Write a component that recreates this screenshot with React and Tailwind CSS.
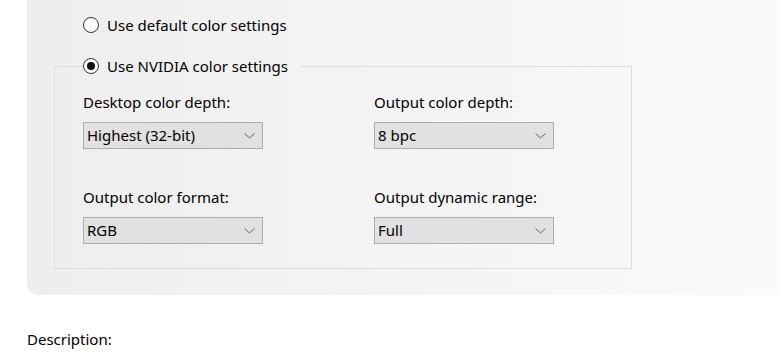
import React, { useState } from 'react'

const Radio = ({ checked, label, onClick }) => {
  return (
    <button onClick={onClick} className="flex items-center gap-2 h-[22px] text-left">
      <span className="w-4 h-4 rounded-full border border-[#333333] bg-white flex items-center justify-center">
        {checked && <span className="w-2 h-2 rounded-full bg-[#111111]" />}
      </span>
      <span>{label}</span>
    </button>
  )
}

const Dropdown = ({ value }) => {
  return (
    <div className="w-[180px] h-[27px] border border-[#adadad] bg-[#e1e1e1] flex items-center justify-between pl-[3px] pr-[7px]">
      <span>{value}</span>
      <svg width="11" height="6" viewBox="0 0 11 6" fill="none">
        <path d="M0.5 0.5 L5.5 5 L10.5 0.5" stroke="#606060" strokeWidth="1" />
      </svg>
    </div>
  )
}

const Field = ({ label, value }) => {
  return (
    <div className="flex flex-col">
      <div className="h-[22px] leading-[22px] mb-[9px]">{label}</div>
      <Dropdown value={value} />
    </div>
  )
}

const App = () => {
  const [mode, setMode] = useState("nvidia")

  return (
    <div className="w-[780px] h-[361px] bg-white overflow-hidden text-[15px] text-black" style={{ fontFamily: '"Noto Sans", "Open Sans", sans-serif' }}>
      <div className="ml-[27px] rounded-bl-[12px] bg-linear-to-r from-[#eeeeee] to-[#fafafa] pt-[14px] pb-[26px]">
        <div className="pl-[56px]">
          <Radio checked={mode === "default"} label="Use default color settings" onClick={() => setMode("default")} />
        </div>
        <fieldset className="ml-[27px] mt-[19px] w-[578px] border border-[#dcdcdc] px-[28px] pb-[24px]">
          <legend className="pr-3">
            <Radio checked={mode === "nvidia"} label="Use NVIDIA color settings" onClick={() => setMode("nvidia")} />
          </legend>
          <div className="grid grid-cols-[291px_180px] gap-y-[37px] pt-[14px]">
            <Field label="Desktop color depth:" value="Highest (32-bit)" />
            <Field label="Output color depth:" value="8 bpc" />
            <Field label="Output color format:" value="RGB" />
            <Field label="Output dynamic range:" value="Full" />
          </div>
        </fieldset>
      </div>
      <div className="ml-[27px] mt-[33px] h-[22px] leading-[22px]">Description:</div>
    </div>
  )
}

export default App
